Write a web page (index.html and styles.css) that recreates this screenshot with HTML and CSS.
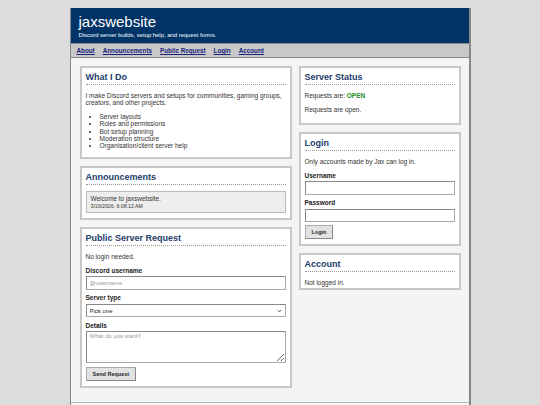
FILE: index.html
```html
<!DOCTYPE html>
<html>
<head>
<meta charset="utf-8">
<link rel="stylesheet" href="styles.css">
</head>
<body>
<div class="page">
  <header class="header">
    <h1 class="site-title">jaxswebsite</h1>
    <p class="site-sub">Discord server builds, setup help, and request forms.</p>
  </header>
  <nav class="nav">
    <a href="#">About</a>
    <a href="#">Announcements</a>
    <a href="#">Public Request</a>
    <a href="#">Login</a>
    <a href="#">Account</a>
  </nav>
  <main class="main">
    <div class="col">
      <section class="panel">
        <h2 class="panel-title">What I Do</h2>
        <p class="text">I make Discord servers and setups for communities, gaming groups, creators, and other projects.</p>
        <ul class="list">
          <li>Server layouts</li>
          <li>Roles and permissions</li>
          <li>Bot setup planning</li>
          <li>Moderation structure</li>
          <li>Organisation/client server help</li>
        </ul>
      </section>
      <section class="panel">
        <h2 class="panel-title">Announcements</h2>
        <div class="notice">
          <div class="notice-text">Welcome to jaxswebsite.</div>
          <div class="notice-date">3/10/2026, 6:08:12 AM</div>
        </div>
      </section>
      <section class="panel">
        <h2 class="panel-title">Public Server Request</h2>
        <p class="text">No login needed.</p>
        <label class="label">Discord username</label>
        <input class="field" type="text" placeholder="@username">
        <label class="label">Server type</label>
        <select class="field select"><option>Pick one</option></select>
        <label class="label">Details</label>
        <textarea class="field area" placeholder="What do you want?"></textarea>
        <button class="btn">Send Request</button>
      </section>
    </div>
    <div class="col">
      <section class="panel panel-status">
        <h2 class="panel-title">Server Status</h2>
        <p class="text">Requests are: <span class="open">OPEN</span></p>
        <p class="text">Requests are open.</p>
      </section>
      <section class="panel">
        <h2 class="panel-title">Login</h2>
        <p class="text">Only accounts made by Jax can log in.</p>
        <label class="label">Username</label>
        <input class="field" type="text">
        <label class="label">Password</label>
        <input class="field" type="password">
        <button class="btn">Login</button>
      </section>
      <section class="panel panel-tight">
        <h2 class="panel-title">Account</h2>
        <p class="text">Not logged in.</p>
      </section>
    </div>
  </main>
  <footer class="footer"></footer>
</div>
</body>
</html>
```
FILE: styles.css
```css
html, body {
  margin: 0;
  padding: 0;
}
body {
  background: #dcdcdc;
  font-family: "Liberation Sans", Arial, sans-serif;
  color: #222;
}
.page {
  width: 398px;
  margin: 8px auto 0;
  border-left: 1px solid #888;
  border-right: 2px solid #888;
  background: #f4f4f4;
}
.header {
  background: #003366;
  color: #fff;
  padding: 6px 8px 7px;
  height: 22px;
}
.site-title {
  margin: 0;
  font-size: 15px;
  font-weight: normal;
  line-height: 15px;
}
.site-sub {
  margin: 3px 0 0;
  font-size: 5.9px;
  line-height: 7px;
}
.nav {
  background: #c8c8c8;
  border-top: 1px solid #888;
  border-bottom: 1px solid #888;
  height: 13px;
  padding: 0 6px;
  display: flex;
  align-items: center;
  gap: 8px;
}
.nav a {
  color: #1a237e;
  font-weight: bold;
  font-size: 6.3px;
  text-decoration: underline;
}
.main {
  display: grid;
  grid-template-columns: 212px 162px;
  gap: 7px;
  padding: 8px 8px 14px 9px;
  align-items: start;
}
.col {
  display: flex;
  flex-direction: column;
  gap: 7px;
}
.panel {
  background: #fff;
  border: 2px solid #c8c8c8;
  padding: 3px 4px 5px;
}
.panel-tight {
  padding-bottom: 2px;
}
.panel-title {
  margin: 0 0 6.5px;
  font-size: 9px;
  line-height: 12px;
  color: #1d3d6b;
  border-bottom: 1px dotted #999;
  padding-bottom: 1px;
}
.text {
  margin: 0 0 6.5px;
  font-size: 6.5px;
  line-height: 7.5px;
  color: #333;
}
.panel .text:last-child {
  margin-bottom: 0;
}
.panel-status .text:last-child {
  margin-bottom: 5px;
}
.open {
  color: #1a8a1a;
  font-weight: bold;
}
.list {
  margin: 0 0 2.5px;
  padding-left: 14px;
  font-size: 6.5px;
  line-height: 7.3px;
  color: #333;
}
.notice {
  background: #eee;
  border: 1px solid #bbb;
  padding: 3px 4px 2px;
}
.notice-text {
  font-size: 6.4px;
  line-height: 8px;
  color: #333;
}
.notice-date {
  font-size: 5.2px;
  line-height: 7px;
  color: #333;
}
.label {
  display: block;
  font-size: 6.5px;
  font-weight: bold;
  line-height: 7px;
  margin-bottom: 2.5px;
  color: #222;
}
.field {
  display: block;
  box-sizing: border-box;
  width: 100%;
  height: 13.5px;
  margin: 0 0 4.5px;
  border: 1px solid #aaa;
  border-top-color: #888;
  border-left-color: #888;
  font-family: "Liberation Sans", Arial, sans-serif;
  font-size: 6px;
  padding: 1px 3px;
  background: #fff;
  border-radius: 0;
}
.field::placeholder {
  color: #999;
}
.select {
  -webkit-appearance: none;
  appearance: none;
  color: #222;
  padding: 0 3px;
  background-image: url("data:image/svg+xml,%3Csvg xmlns='http://www.w3.org/2000/svg' width='6' height='4' viewBox='0 0 6 4'%3E%3Cpath d='M1 1l2 2 2-2' fill='none' stroke='%23333' stroke-width='1.1'/%3E%3C/svg%3E");
  background-repeat: no-repeat;
  background-position: right 3px center;
  background-size: 5px 4px;
}
.area {
  height: 31.5px;
  resize: vertical;
  margin-bottom: 6px;
}
.btn {
  display: block;
  font-family: "Liberation Sans", Arial, sans-serif;
  font-size: 5.5px;
  font-weight: bold;
  height: 14px;
  padding: 0 6px;
  background: #e2e2e2;
  border: 1px solid #aaa;
  border-right-color: #888;
  border-bottom-color: #888;
  color: #222;
  margin-top: -1.5px;
}
.footer {
  border-top: 1px solid #bbb;
  height: 20px;
}
```
